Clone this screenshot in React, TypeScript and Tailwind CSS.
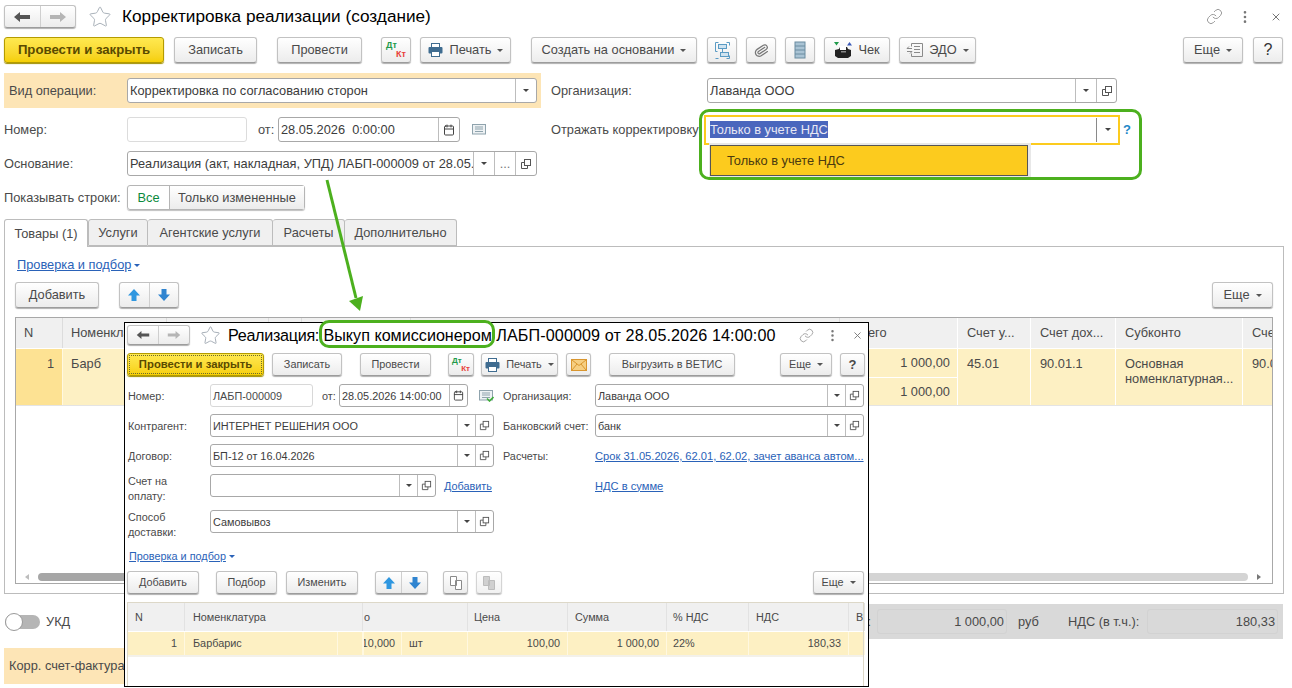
import type { ReactNode } from "react";
import { Star, Link, EllipsisVertical, X, Calendar, Paperclip } from "lucide-react";

const btn =
  "flex shrink-0 items-center justify-center rounded-[3px] border border-[#c2c2c2] border-b-[#9c9c9c] bg-linear-to-b from-white to-[#ececec] text-[#4a4a4a] shadow-[0_1px_1px_#b0b0b0]";

function Btn({ className = "", children }: { className?: string; children?: ReactNode }) {
  return <div className={`${btn} ${className}`}>{children}</div>;
}

function Caret() {
  return <span className="ml-[6px] inline-block h-0 w-0 border-x-[3px] border-t-[3px] border-x-transparent border-t-[#555]" />;
}

function Label({ className = "", children }: { className?: string; children?: ReactNode }) {
  return <span className={`shrink-0 pt-px ${className}`}>{children}</span>;
}

function OpenIcon({ small }: { small?: boolean }) {
  return (
    <svg width={small ? 11 : 12} height={small ? 11 : 12} viewBox="0 0 12 12" fill="none" stroke="#555">
      <rect x="4.5" y="1.5" width="6" height="6" />
      <path d="M4.5 4.5h-3v6h6v-3" />
    </svg>
  );
}

function Cell({ className = "", children }: { className?: string; children?: ReactNode }) {
  return <div className={`flex h-full shrink-0 items-center justify-center border-l border-[#bdbdbd] ${className}`}>{children}</div>;
}

function Field({
  className = "",
  text,
  dropW = "",
  openW = "",
  extraW = "",
  calW = "",
  small,
}: {
  className?: string;
  text?: string;
  dropW?: string;
  openW?: string;
  extraW?: string;
  calW?: string;
  small?: boolean;
}) {
  return (
    <div className={`flex shrink-0 items-center overflow-hidden rounded-[3px] border border-[#a8a8a8] bg-white ${className}`}>
      <div className="min-w-0 flex-1 overflow-hidden pt-px pl-[2px] whitespace-pre text-[#3c3c3c]">{text}</div>
      {calW && (
        <Cell className={calW}>
          <Calendar size={small ? 11 : 12} className="text-[#444]" />
        </Cell>
      )}
      {dropW && (
        <Cell className={dropW}>
          <span className="inline-block h-0 w-0 border-x-[3px] border-t-[3px] border-x-transparent border-t-[#444]" />
        </Cell>
      )}
      {extraW && <Cell className={`${extraW} text-[#777]`}>...</Cell>}
      {openW && (
        <Cell className={openW}>
          <OpenIcon small={small} />
        </Cell>
      )}
    </div>
  );
}

function NavButtons({ className = "", size = 18 }: { className?: string; size?: number }) {
  return (
    <div className={`${btn} ${className}`}>
      <div className="flex flex-1 items-center justify-center">
        <svg width={size} height="12" viewBox="0 0 18 12" fill="#555">
          <path d="M1 6l6-5v3h10v4H7v3z" />
        </svg>
      </div>
      <div className="flex h-full flex-1 items-center justify-center border-l border-[#cfcfcf]">
        <svg width={size} height="12" viewBox="0 0 18 12" fill="#b5b5b5">
          <path d="M17 6l-6-5v3H1v4h10v3z" />
        </svg>
      </div>
    </div>
  );
}

function DtKt({ big }: { big?: boolean }) {
  return (
    <div className={`relative font-bold ${big ? "h-[18px] w-[20px] text-[9px]" : "h-[16px] w-[18px] text-[8px]"} leading-none`}>
      <span className="absolute top-0 left-0 text-[#1f9a4a]">Дт</span>
      <span className="absolute right-0 bottom-0 text-[#e8403a]">Кт</span>
    </div>
  );
}

function Printer() {
  return (
    <svg width="15" height="14" viewBox="0 0 15 14">
      <rect x="3.5" y="0.5" width="8" height="4" fill="#fff" stroke="#3f6c90" />
      <rect x="0.5" y="4" width="14" height="6.5" rx="1" fill="#3f6c90" />
      <rect x="3.5" y="8.5" width="8" height="5" fill="#fff" stroke="#3f6c90" />
    </svg>
  );
}

function UpDown({ className = "" }: { className?: string }) {
  return (
    <div className={`${btn} ${className}`}>
      <div className="flex flex-1 items-center justify-center">
        <svg width="14" height="14" viewBox="0 0 14 14" fill="#2f97e0">
          <path d="M7 1l6 6.5H9.5V13h-5V7.5H1z" />
        </svg>
      </div>
      <div className="flex h-full flex-1 items-center justify-center border-l border-[#cfcfcf]">
        <svg width="14" height="14" viewBox="0 0 14 14" fill="#2f84d0">
          <path d="M7 13L1 6.5h3.5V1h5v5.5H13z" />
        </svg>
      </div>
    </div>
  );
}

function MemoIcon({ check }: { check?: boolean }) {
  return (
    <svg width="15" height="13" viewBox="0 0 15 13" fill="none" stroke="#8fa3ad">
      <rect x="0.5" y="1.5" width="13" height="9.5" fill="#eef2f4" />
      <path d="M3 4h8M3 6h8M3 8.5h8" />
      {check && <path d="M8 9.5l2.5 2.5 4-4" stroke="#3fae3a" strokeWidth="1.6" />}
    </svg>
  );
}

const mainCols = [
  { w: "w-[47px]", head: "N" },
  { w: "w-[104px]", head: "Номенклатура" },
  { w: "w-[102px]" },
  { w: "w-[33px]" },
  { w: "w-[109px]" },
  { w: "w-[429px]" },
];

const subHead = [
  { w: "w-[57px]", head: "N", cls: "pl-[7px]" },
  { w: "w-[178px]", head: "Номенклатура", cls: "pl-[8px]" },
  { w: "w-[105px]", head: "о", cls: "pl-[1px]" },
  { w: "w-[100px]", head: "Цена", cls: "pl-[6px]" },
  { w: "w-[99px]", head: "Сумма", cls: "pl-[7px]" },
  { w: "w-[82px]", head: "% НДС", cls: "pl-[6px]" },
  { w: "w-[100px]", head: "НДС", cls: "pl-[7px]" },
  { w: "w-[16px]", head: "В", cls: "pl-[7px]" },
];

const subRow = [
  { w: "w-[57px]", cell: "1", cls: "justify-end pr-[7px]" },
  { w: "w-[153px]", cell: "Барбарис", cls: "pl-[8px]" },
  { w: "w-[25px]", cell: "" },
  { w: "w-[39px]", cell: "10,000", cls: "justify-end pr-[6px] border-l border-[#b5b5b5]" },
  { w: "w-[66px]", cell: "шт", cls: "pl-[7px]" },
  { w: "w-[100px]", cell: "100,00", cls: "justify-end pr-[7px]" },
  { w: "w-[99px]", cell: "1 000,00", cls: "justify-end pr-[7px]" },
  { w: "w-[82px]", cell: "22%", cls: "pl-[6px]" },
  { w: "w-[100px]", cell: "180,33", cls: "justify-end pr-[7px]" },
  { w: "w-[16px]", cell: "" },
];

function SubWindow() {
  return (
    <div className="absolute top-[322px] left-[124px] z-10 flex h-[365px] w-[745px] flex-col overflow-hidden border border-black bg-white text-[10.85px] text-[#4a4a4a]">
      <div className="flex h-[25px] shrink-0 items-center pl-[2px]">
        <NavButtons className="mb-[2px] h-[20px] w-[63px]" size={14} />
        <Star size={21} strokeWidth={1} className="ml-[10px] text-[#9aa4ae]" />
        <span className="ml-[7px] text-[16.15px] whitespace-nowrap text-black">
          <span className="tracking-[-0.3px]">Реализация:</span> Выкуп комиссионером <span className="tracking-[0.1px]">ЛАБП-000009 от 28.05.2026 14:00:00</span>
        </span>
        <Link size={15} strokeWidth={1.2} className="ml-[23px] text-[#8a8a8a]" />
        <EllipsisVertical size={15} className="ml-[11px] text-[#777]" />
        <X size={11} className="ml-[12px] text-[#777]" />
      </div>
      <div className="mt-[5px] flex h-[23px] shrink-0 items-center pl-[2px]">
        <div className="flex h-full w-[137px] items-center justify-center rounded-[3px] border border-[#b49b00] bg-linear-to-b from-[#ffe94f] to-[#f7d000] text-[11.3px] font-bold text-[#5a4a00] shadow-[0_1px_1px_#a09000] outline-1 -outline-offset-3 outline-[#6a6a30] outline-dotted">
          Провести и закрыть
        </div>
        <Btn className="ml-[8px] h-full w-[70px]">Записать</Btn>
        <Btn className="ml-[18px] h-full w-[71px]">Провести</Btn>
        <Btn className="ml-[17px] h-full w-[26px]">
          <DtKt />
        </Btn>
        <Btn className="ml-[7px] h-full w-[77px]">
          <Printer />
          <span className="ml-[6px]">Печать</span>
          <Caret />
        </Btn>
        <Btn className="ml-[8px] h-full w-[25px]">
          <svg width="16" height="12" viewBox="0 0 16 12" stroke="#d9962f">
            <rect x="0.5" y="0.5" width="15" height="11" fill="#f6cf82" />
            <path d="M1 1l7 5.5L15 1M1 11l5-6M15 11l-5-6" fill="none" />
          </svg>
        </Btn>
        <Btn className="ml-[18px] h-full w-[126px]">Выгрузить в ВЕТИС</Btn>
        <Btn className="ml-[45px] h-full w-[52px]">
          Еще
          <Caret />
        </Btn>
        <Btn className="ml-[8px] h-full w-[25px] text-[13px] font-bold">?</Btn>
      </div>
      <div className="mt-[8px] flex h-[23px] shrink-0 items-center pl-[3px]">
        <Label className="w-[82px]">Номер:</Label>
        <div className="flex h-full w-[103px] shrink-0 items-center rounded-[3px] border border-[#d8d8d8] pt-px pl-[2px]">ЛАБП-000009</div>
        <Label className="ml-[9px] w-[17px]">от:</Label>
        <Field className="h-full w-[129px]" text="28.05.2026 14:00:00" calW="w-[18px]" small />
        <span className="ml-[11px] shrink-0">
          <MemoIcon check />
        </span>
        <Label className="ml-[9px] w-[92px]">Организация:</Label>
        <Field className="h-full w-[269px]" text="Лаванда ООО" dropW="w-[18px]" openW="w-[18px]" small />
      </div>
      <div className="mt-[7px] flex h-[23px] shrink-0 items-center pl-[3px]">
        <Label className="w-[82px]">Контрагент:</Label>
        <Field className="h-full w-[284px]" text="ИНТЕРНЕТ РЕШЕНИЯ ООО" dropW="w-[18px]" openW="w-[18px]" small />
        <Label className="ml-[9px] w-[92px]">Банковский счет:</Label>
        <Field className="h-full w-[269px]" text="банк" dropW="w-[18px]" openW="w-[18px]" small />
      </div>
      <div className="mt-[7px] flex h-[23px] shrink-0 items-center pl-[3px]">
        <Label className="w-[82px]">Договор:</Label>
        <Field className="h-full w-[284px]" text="БП-12 от 16.04.2026" dropW="w-[18px]" openW="w-[18px]" small />
        <Label className="ml-[9px] w-[92px]">Расчеты:</Label>
        <Label className="text-[11.15px] whitespace-nowrap text-[#2a62b8] underline">Срок 31.05.2026, 62.01, 62.02, зачет аванса автом...</Label>
      </div>
      <div className="mt-[7px] flex h-[23px] shrink-0 items-center pl-[3px]">
        <span className="w-[82px] shrink-0 pt-[7px] leading-[15px]">
          Счет на
          <br />
          оплату:
        </span>
        <Field className="h-full w-[226px]" dropW="w-[18px]" openW="w-[18px]" small />
        <Label className="ml-[8px] w-[50px] text-[#2a62b8] underline">Добавить</Label>
        <Label className="ml-[101px] text-[11.15px] text-[#2a62b8] underline">НДС в сумме</Label>
      </div>
      <div className="mt-[13px] flex h-[23px] shrink-0 items-center pl-[3px]">
        <span className="w-[82px] shrink-0 pt-[7px] leading-[15px]">
          Способ
          <br />
          доставки:
        </span>
        <Field className="h-full w-[284px]" text="Самовывоз" dropW="w-[18px]" openW="w-[18px]" small />
      </div>
      <div className="mt-[16px] flex h-[14px] shrink-0 items-center pl-[4px]">
        <span className="text-[#2a62b8] underline">Проверка и подбор</span>
        <span className="ml-[3px] inline-block h-0 w-0 border-x-[3px] border-t-[3px] border-x-transparent border-t-[#2a62b8]" />
      </div>
      <div className="mt-[8px] flex h-[23px] shrink-0 items-center pl-[2px]">
        <Btn className="h-full w-[72px]">Добавить</Btn>
        <Btn className="ml-[17px] h-full w-[61px]">Подбор</Btn>
        <Btn className="ml-[9px] h-full w-[72px]">Изменить</Btn>
        <UpDown className="ml-[17px] h-full w-[53px]" />
        <Btn className="ml-[15px] h-full w-[25px]">
          <svg width="14" height="14" viewBox="0 0 14 14" fill="#fff" stroke="#8a8a8a">
            <path d="M1.5.5h6v9h-6zM6.5 4.5h6v9h-6z" />
          </svg>
        </Btn>
        <Btn className="ml-[8px] h-full w-[26px] opacity-70">
          <svg width="14" height="14" viewBox="0 0 14 14" fill="#bdbdbd" stroke="#a0a0a0">
            <path d="M1.5.5h6v9h-6zM6.5 4.5h6v9h-6z" />
          </svg>
        </Btn>
        <Btn className="ml-[311px] h-full w-[51px]">
          Еще
          <Caret />
        </Btn>
      </div>
      <div className="mt-[8px] ml-[2px] flex w-[737px] flex-1 flex-col border-x border-t border-[#ddd8c8]">
        <div className="flex h-[28px] shrink-0 bg-[#f0f0f0]">
          {subHead.map((c, i) => (
            <div key={i} className={`flex h-full shrink-0 items-center overflow-hidden border-r border-[#e2e2e2] ${c.w} ${c.cls}`}>
              {c.head}
            </div>
          ))}
        </div>
        <div className="flex h-[24px] shrink-0 border-t border-white bg-[#fdf0c3]">
          {subRow.map((c, i) => (
            <div key={i} className={`flex h-full shrink-0 items-center overflow-hidden border-r border-[#fff8e0] ${c.w} ${c.cls ?? ""}`}>
              {c.cell}
            </div>
          ))}
        </div>
        <div className="h-[2px] bg-[#f3f1ea]" />
      </div>
    </div>
  );
}

export default function App() {
  return (
    <div className="relative h-[688px] w-[1292px] overflow-hidden bg-white font-['Liberation_Sans',Arial,sans-serif] text-[12.8px] text-[#4a4a4a]">
      {/* header */}
      <div className="flex h-[37px] items-center pr-[10px] pb-[4px] pl-[4px]">
        <NavButtons className="h-[23px] w-[72px]" />
        <Star size={24} strokeWidth={1} className="ml-[12px] text-[#aab2ba]" />
        <span className="ml-[10px] text-[17.2px] text-black">Корректировка реализации (создание)</span>
        <Link size={17} strokeWidth={1.2} className="ml-auto text-[#8a8a8a]" />
        <EllipsisVertical size={16} className="ml-[14px] text-[#777]" />
        <X size={12} className="ml-[17px] text-[#777]" />
      </div>

      {/* toolbar */}
      <div className="flex h-[26px] items-center pl-[4px]">
        <div className="flex h-full w-[160px] items-center justify-center rounded-[3px] border border-[#b49b00] bg-linear-to-b from-[#ffe94f] to-[#f5cf00] text-[13.2px] font-bold text-[#5a4a00] shadow-[0_1px_1px_#a09000]">
          Провести и закрыть
        </div>
        <Btn className="ml-[10px] h-full w-[83px]">Записать</Btn>
        <Btn className="ml-[20px] h-full w-[85px]">Провести</Btn>
        <Btn className="ml-[19px] h-full w-[30px]">
          <DtKt big />
        </Btn>
        <Btn className="ml-[9px] h-full w-[91px]">
          <Printer />
          <span className="ml-[7px]">Печать</span>
          <Caret />
        </Btn>
        <Btn className="ml-[20px] h-full w-[166px]">
          Создать на основании
          <Caret />
        </Btn>
        <Btn className="ml-[10px] h-full w-[30px]">
          <svg width="15" height="17" viewBox="0 0 15 17" fill="none" stroke="#5a9bc4">
            <path d="M3.5.5h-3v9h2M11.5.5h3v3M14.5 13.5v3h-3M.5 16.5h3" />
            <rect x="3.5" y="2.5" width="8" height="4" fill="#cfe3f0" />
            <rect x="5.5" y="10.5" width="8" height="4" fill="#cfe3f0" />
            <path d="M7.5 6.5v4" />
          </svg>
        </Btn>
        <Btn className="ml-[9px] h-full w-[30px]">
          <Paperclip size={15} className="rotate-12 text-[#777]" />
        </Btn>
        <Btn className="ml-[9px] h-full w-[30px]">
          <svg width="12" height="18" viewBox="0 0 12 18" fill="#a9c3d4" stroke="#6b8ca0">
            <rect x="1" y="1" width="10" height="16" />
            <path d="M1 5h10M1 9h10M1 13h10" />
          </svg>
        </Btn>
        <Btn className="ml-[9px] h-full w-[66px]">
          <svg width="18" height="18" viewBox="0 0 18 18">
            <path d="M0 1h5L2.5 4.5z" fill="#1f9a4a" />
            <path d="M13 4.5h5L15.5 1z" fill="#3a5ab8" />
            <path d="M1 9l4-1 1-2h7l1 2 3 1v6l-3 2H4l-3-2z" fill="#222" />
            <path d="M6 5h6v4H6z" fill="#fff" />
            <path d="M7 10h5v1.5H7z" fill="#888" />
          </svg>
          <span className="ml-[6px]">Чек</span>
        </Btn>
        <Btn className="ml-[9px] h-full w-[77px]">
          <svg width="18" height="16" viewBox="0 0 18 16" fill="none" stroke="#8a8a8a">
            <path d="M5.5 4.5v-3h11v13h-11v-3M8 4.5h6M8 7.5h6M8 10.5h6M1 6.5h5M3 4.5l-2 2M1 9.5h5M4 11.5l2-2" />
          </svg>
          <span className="ml-[5px]">ЭДО</span>
          <Caret />
        </Btn>
        <Btn className="ml-auto h-full w-[60px]">
          Еще
          <Caret />
        </Btn>
        <Btn className="mr-[9px] ml-[10px] h-full w-[30px] text-[16px] text-[#333]">?</Btn>
      </div>

      {/* form rows */}
      <div className="mt-[10px] flex h-[35px] items-center pl-[4px]">
        <div className="flex h-full w-[537px] shrink-0 items-center bg-[#fde5b6] pl-[5px]">
          <Label className="w-[118px]">Вид операции:</Label>
          <Field className="h-[25px] w-[410px]" text="Корректировка по согласованию сторон" dropW="w-[21px]" />
        </div>
        <Label className="ml-[10px] w-[156px]">Организация:</Label>
        <Field className="h-[25px] w-[410px]" text="Лаванда ООО" dropW="w-[21px]" openW="w-[20px]" />
      </div>

      <div className="mt-[9px] flex h-[25px] items-center pl-[4px]">
        <div className="flex h-full w-[537px] shrink-0 items-center">
          <Label className="w-[123px]">Номер:</Label>
          <div className="h-full w-[120px] rounded-[3px] border border-[#dcdcdc]" />
          <Label className="ml-[11px] w-[20px]">от:</Label>
          <Field className="h-full w-[182px]" text="28.05.2026  0:00:00" calW="w-[21px]" />
          <span className="ml-[12px]">
            <MemoIcon />
          </span>
        </div>
        <Label className="ml-[10px] w-[153px] whitespace-nowrap">Отражать корректировку</Label>
        <div className="flex h-[30px] w-[416px] shrink-0 items-center border-2 border-[#fccb1e] bg-white pl-[4px]">
          <span className="flex-1 pt-px">
            <span className="bg-[#4a66bd] py-[1px] text-[#e8e8f4]">Только в учете НДС</span>
          </span>
          <div className="flex h-[24px] w-[22px] items-center justify-center border-l border-[#8a8a8a]">
            <span className="inline-block h-0 w-0 border-x-[3px] border-t-[3px] border-x-transparent border-t-[#444]" />
          </div>
        </div>
        <span className="ml-[3px] text-[13px] font-bold text-[#1e88c7]">?</span>
      </div>

      <div className="mt-[9px] flex h-[25px] items-center pl-[4px]">
        <Label className="w-[123px]">Основание:</Label>
        <Field className="h-full w-[410px]" text="Реализация (акт, накладная, УПД) ЛАБП-000009 от 28.05.2026 14:00:00" dropW="w-[21px]" extraW="w-[21px]" openW="w-[21px]" />
      </div>

      <div className="mt-[9px] flex h-[25px] items-center pl-[4px]">
        <Label className="w-[123px]">Показывать строки:</Label>
        <div className="flex h-full w-[178px] rounded-[3px] border border-[#b5b5b5] shadow-[0_1px_1px_#c0c0c0]">
          <div className="flex w-[41px] items-center justify-center pt-px text-[#0a8a3c]">Все</div>
          <div className="flex flex-1 items-center justify-center border-l border-[#b5b5b5] bg-linear-to-b from-white to-[#ececec] pt-px">Только измененные</div>
        </div>
      </div>

      {/* tabs */}
      <div className="relative z-[1] mt-[9px] flex h-[28px] pl-[4px]">
        <div className="flex h-full w-[84px] items-center justify-center rounded-t-[3px] border-x border-t border-[#bcbcbc] bg-white pt-px">Товары (1)</div>
        <div className="flex h-[27px] w-[60px] items-center justify-center rounded-t-[3px] border-x border-t border-b border-[#bcbcbc] bg-[#f0f0f0] pt-px">Услуги</div>
        <div className="flex h-[27px] w-[125px] items-center justify-center rounded-t-[3px] border-t border-r border-b border-[#bcbcbc] bg-[#f0f0f0] pt-px">Агентские услуги</div>
        <div className="flex h-[27px] w-[72px] items-center justify-center rounded-t-[3px] border-t border-r border-b border-[#bcbcbc] bg-[#f0f0f0] pt-px">Расчеты</div>
        <div className="flex h-[27px] w-[112px] items-center justify-center rounded-t-[3px] border-t border-r border-b border-[#bcbcbc] bg-[#f0f0f0] pt-px">Дополнительно</div>
      </div>

      {/* panel */}
      <div className="-mt-px ml-[4px] flex h-[348px] w-[1280px] flex-col border border-[#bcbcbc] px-[10px]">
        <div className="mt-[11px] flex h-[14px] items-center pl-[2px]">
          <span className="text-[#2a62b8] underline">Проверка и подбор</span>
          <span className="ml-[3px] inline-block h-0 w-0 border-x-[3px] border-t-[3px] border-x-transparent border-t-[#2a62b8]" />
        </div>
        <div className="mt-[10px] flex h-[26px] items-center">
          <Btn className="h-full w-[84px]">Добавить</Btn>
          <UpDown className="ml-[20px] h-full w-[60px]" />
          <Btn className="ml-auto h-full w-[61px]">
            Еще
            <Caret />
          </Btn>
        </div>
        <div className="mt-[9px] flex h-[267px] flex-col overflow-hidden border border-[#a8a8a8]">
          <div className="flex h-[30px] shrink-0 bg-[#f0f0f0]">
            {mainCols.map((c, i) => (
              <div key={i} className={`flex h-full shrink-0 items-center border-r border-[#dcdcdc] pl-[8px] ${c.w}`}>
                {c.head}
              </div>
            ))}
            <div className="flex h-full w-[118px] shrink-0 items-center border-r border-white pl-[13px]">Всего</div>
            <div className="flex h-full w-[73px] shrink-0 items-center border-r border-white pl-[9px]">Счет у...</div>
            <div className="flex h-full w-[85px] shrink-0 items-center border-r border-white pl-[9px]">Счет дох...</div>
            <div className="flex h-full w-[127px] shrink-0 items-center border-r border-white pl-[9px]">Субконто</div>
            <div className="flex h-full flex-1 items-center overflow-hidden pl-[9px] whitespace-nowrap">Счет</div>
          </div>
          <div className="flex h-[57px] shrink-0 border-t border-white bg-[#fdf0c3]">
            <div className="flex h-full w-[47px] shrink-0 items-start justify-end border-r border-[#fff8e0] bg-[#fde293] pt-[5px] pr-[8px]">1</div>
            <div className="h-full w-[104px] shrink-0 border-r border-[#fff8e0] pt-[5px] pl-[8px]">Барб</div>
            <div className="h-full w-[673px] shrink-0" />
            <div className="flex h-full w-[118px] shrink-0 flex-col border-r border-white">
              <div className="flex h-[29px] items-center justify-end border-b border-white pr-[7px]">1 000,00</div>
              <div className="flex flex-1 items-center justify-end pr-[7px]">1 000,00</div>
            </div>
            <div className="h-full w-[73px] shrink-0 border-r border-white pt-[5px] pl-[9px]">45.01</div>
            <div className="h-full w-[85px] shrink-0 border-r border-white pt-[5px] pl-[9px]">90.01.1</div>
            <div className="h-full w-[127px] shrink-0 overflow-hidden border-r border-white pt-[7px] pl-[9px] leading-[15px]">
              Основная номенклатурная...
            </div>
            <div className="h-full flex-1 overflow-hidden pt-[5px] pl-[9px] whitespace-nowrap">90.01.2</div>
          </div>
          <div className="h-px shrink-0 bg-[#e4e4e4]" />
          <div className="mt-auto mb-[2px] flex h-[8px] shrink-0 items-center">
            <span className="ml-[9px] inline-block h-0 w-0 border-y-[3px] border-r-[4px] border-y-transparent border-r-[#bdbdbd]" />
            <div className="ml-[9px] h-[8px] w-[500px] rounded-l-[4px] bg-[#a6a6a6]" />
            <div className="h-[8px] w-[710px] rounded-r-[4px] bg-[#d4d4d4]" />
            <span className="ml-[9px] inline-block h-0 w-0 border-y-[3px] border-l-[4px] border-y-transparent border-l-[#777]" />
          </div>
        </div>
      </div>

      {/* totals */}
      <div className="mt-[10px] flex h-[35px] items-center pl-[5px]">
        <div className="flex h-[14px] w-[35px] items-center rounded-full bg-[#b5b5b5]">
          <div className="h-[18px] w-[18px] rounded-full border border-[#999] bg-white" />
        </div>
        <span className="ml-[6px]">УКД</span>
        <div className="mr-[9px] ml-auto flex h-full w-[700px] items-center justify-end bg-[#d9d9d9] pr-[5px]">
          <span className="mr-[6px]">Всего:</span>
          <div className="flex h-[25px] w-[130px] items-center justify-end rounded-[3px] border border-[#d2d2d2] pr-[2px]">1 000,00</div>
          <span className="ml-[11px] w-[50px]">руб</span>
          <span className="w-[79px] whitespace-nowrap">НДС (в т.ч.):</span>
          <div className="flex h-[25px] w-[131px] items-center justify-end rounded-[3px] border border-[#d2d2d2] pr-[2px]">180,33</div>
        </div>
      </div>

      <div className="mt-[9px] ml-[4px] flex h-[36px] w-[537px] items-center bg-[#fde5b6] pl-[5px]">Корр. счет-фактура</div>

      {/* dropdown list */}
      <div className="absolute top-[143px] left-[709px] z-[5] h-[35px] w-[322px] bg-[#e8e8e8] pt-[2px] pl-[1px]">
        <div className="flex h-[31px] w-[318px] items-center border border-[#555] bg-[#fccb1e] pl-[16px] text-[#4a3a10]">Только в учете НДС</div>
      </div>

      <SubWindow />

      {/* green annotations */}
      <svg className="pointer-events-none absolute top-[178px] left-[320px] z-20" width="50" height="135" viewBox="0 0 50 135">
        <path d="M7 2L36 120" stroke="#4cb01e" strokeWidth="3" />
        <path d="M40 133L29 123L43 118z" fill="#4cb01e" />
      </svg>
      <div className="pointer-events-none absolute top-[109px] left-[699px] z-20 h-[71px] w-[443px] rounded-[10px] border-[3px] border-[#4cb01e]" />
      <div className="pointer-events-none absolute top-[320px] left-[319px] z-20 h-[28px] w-[176px] rounded-[10px] border-[3px] border-[#4cb01e]" />
    </div>
  );
}
